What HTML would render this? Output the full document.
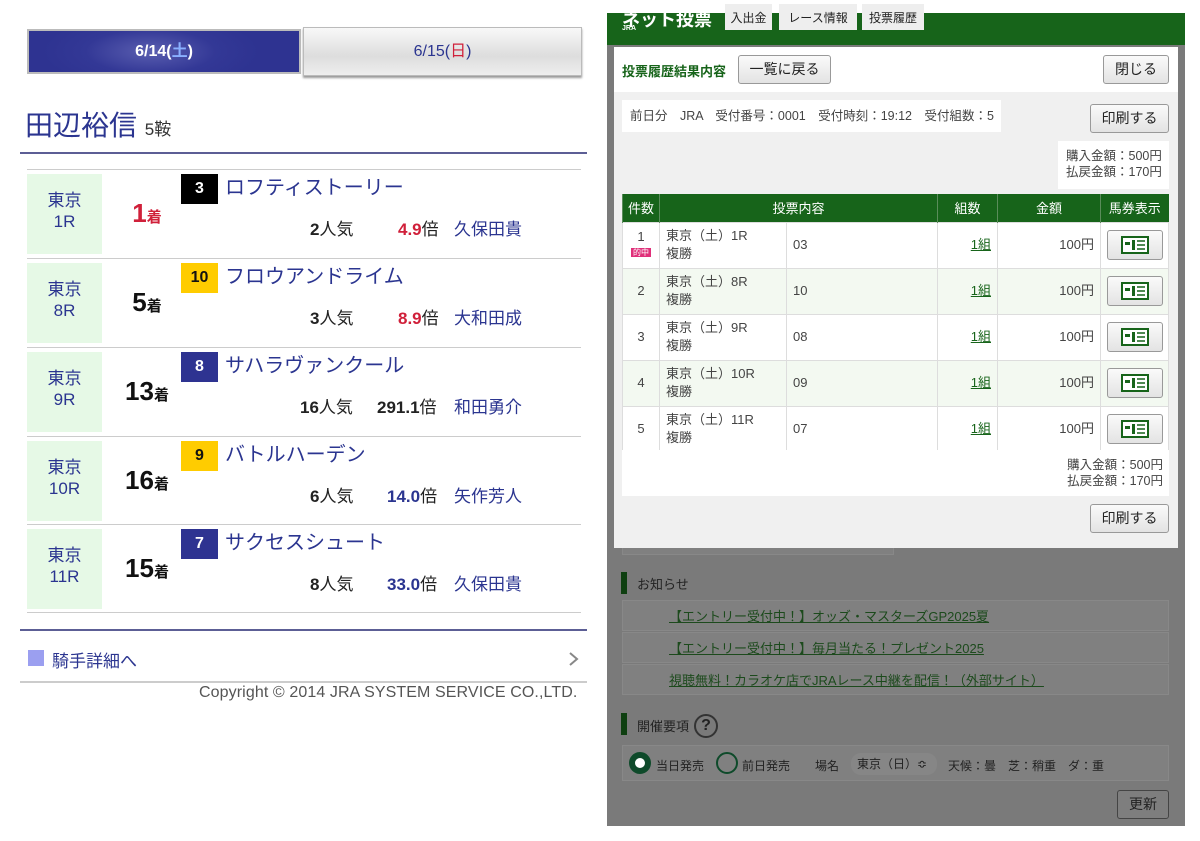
<!DOCTYPE html>
<html><head><meta charset="utf-8"><style>
*{margin:0;padding:0;box-sizing:border-box}
body{width:1200px;height:841px;background:#fff;position:relative;overflow:hidden;font-family:"Liberation Sans","Noto Sans CJK JP",sans-serif}
.a{position:absolute}
.tab1{left:27px;top:29px;width:274px;height:45px;background:radial-gradient(ellipse 40% 90% at 45% 50%,#5a5eb0 0%,#333896 60%,#2e3391 100%);border:2px solid #bbb;color:#fff;font-size:16px;text-align:center;line-height:41px;font-weight:bold}
.tab2{left:303px;top:27px;width:279px;height:49px;background:linear-gradient(#f8f8f8,#ddd 60%,#eee);border:1px solid #bbb;box-shadow:0 2px 2px #999;color:#2b3590;font-size:16px;text-align:center;line-height:47px}
.row{left:27px;width:554px;height:89px;border-top:1px solid #ccc}
.venue{left:0;top:4px;width:75px;height:80px;background:#e6f9e6;color:#2b3590;font-size:17px;text-align:center;padding-top:16px;line-height:21px}
.pos{left:85px;top:28px;width:70px;text-align:center;font-weight:bold;font-size:26px;color:#111}
.pos small{font-size:15px}
.badge{left:154px;top:4px;width:37px;height:30px;font-weight:bold;font-size:16px;text-align:center;line-height:30px}
.name{left:198px;top:4px;font-size:20px;color:#2b3590;line-height:28px}
.st{top:47px;font-size:17px;color:#222;line-height:26px}
.gbtn{background:linear-gradient(#fafafa,#e3e3e3);border:1px solid #999;border-radius:3px;font-size:14px;color:#222;text-align:center}
table{border-collapse:collapse;position:absolute;left:622px;top:194px;width:547px;font-size:13px;color:#444;background:#fff}
th{background:#17641a;color:#fff;font-weight:normal;height:28px;border-left:1px solid #5a8c5a}
td{border:1px solid #ddd;height:46px;vertical-align:middle;padding:0 6px;line-height:18px}
tr.e td{background:#f3f9f1}
.ic{display:inline-block;width:56px;height:30px;background:linear-gradient(#fafafa,#e3e3e3);border:1px solid #999;border-radius:3px;vertical-align:middle;padding-top:5px}
.nl{left:622px;width:547px;height:31px;background:#808080;border:1px solid #888;font-size:13px;color:#1c4a1c;padding-left:46px;line-height:31px;text-decoration:underline}
.ht{top:4px;height:26px;background:#eee;font-size:12px;text-align:center;line-height:28px;color:#222}
</style></head><body>
<div class="a tab1">6/14(<span style="color:#8ab0ff">土</span>)</div>
<div class="a tab2">6/15(<span style="color:#d0203a">日</span>)</div>
<div class="a" style="left:25px;top:104px;font-size:28px;color:#2b3590">田辺裕信 <span style="font-size:17px;color:#333">5鞍</span></div>
<div class="a" style="left:20px;top:152px;width:567px;height:2px;background:#5c5e95"></div>

<div class="a row" style="top:169px"><div class="a venue">東京<br>1R</div><div class="a pos" style="color:#d0203a">1<small>着</small></div><div class="a badge" style="background:#000;color:#fff">3</div><div class="a name">ロフティストーリー</div><div class="a st" style="left:283px"><b>2</b>人気</div><div class="a st" style="left:371px"><b style="color:#d0203a">4.9</b>倍</div><div class="a st" style="left:427px;color:#2b3590">久保田貴</div></div>
<div class="a row" style="top:258px"><div class="a venue">東京<br>8R</div><div class="a pos">5<small>着</small></div><div class="a badge" style="background:#ffcc00;color:#111">10</div><div class="a name">フロウアンドライム</div><div class="a st" style="left:283px"><b>3</b>人気</div><div class="a st" style="left:371px"><b style="color:#d0203a">8.9</b>倍</div><div class="a st" style="left:427px;color:#2b3590">大和田成</div></div>
<div class="a row" style="top:347px"><div class="a venue">東京<br>9R</div><div class="a pos">13<small>着</small></div><div class="a badge" style="background:#2e3391;color:#fff">8</div><div class="a name">サハラヴァンクール</div><div class="a st" style="left:273px"><b>16</b>人気</div><div class="a st" style="left:350px"><b>291.1</b>倍</div><div class="a st" style="left:427px;color:#2b3590">和田勇介</div></div>
<div class="a row" style="top:436px"><div class="a venue">東京<br>10R</div><div class="a pos">16<small>着</small></div><div class="a badge" style="background:#ffcc00;color:#111">9</div><div class="a name">バトルハーデン</div><div class="a st" style="left:283px"><b>6</b>人気</div><div class="a st" style="left:360px"><b style="color:#2b3590">14.0</b>倍</div><div class="a st" style="left:427px;color:#2b3590">矢作芳人</div></div>
<div class="a row" style="top:524px;border-bottom:1px solid #ccc"><div class="a venue">東京<br>11R</div><div class="a pos">15<small>着</small></div><div class="a badge" style="background:#2e3391;color:#fff">7</div><div class="a name">サクセスシュート</div><div class="a st" style="left:283px"><b>8</b>人気</div><div class="a st" style="left:360px"><b style="color:#2b3590">33.0</b>倍</div><div class="a st" style="left:427px;color:#2b3590">久保田貴</div></div>

<div class="a" style="left:20px;top:629px;width:567px;height:2px;background:#5c5e95"></div>
<div class="a" style="left:28px;top:650px;width:16px;height:16px;background:#9b9ff0"></div>
<div class="a" style="left:52px;top:647px;font-size:17px;color:#2b3590">騎手詳細へ</div>
<svg class="a" style="left:568px;top:651px" width="12" height="16"><path d="M2 2l7 6-7 6" fill="none" stroke="#888" stroke-width="2"/></svg>
<div class="a" style="left:20px;top:681px;width:567px;height:2px;background:#ccc"></div>
<div class="a" style="left:199px;top:684px;font-size:16px;color:#555;letter-spacing:0.1px">Copyright © 2014 JRA SYSTEM SERVICE CO.,LTD.</div>

<!-- right -->
<div class="a" style="left:607px;top:13px;width:578px;height:813px;background:#7a7a7a"></div>
<div class="a" style="left:607px;top:13px;width:578px;height:32px;background:#17641a"></div>
<div class="a" style="left:622px;top:6px;color:#fff;font-weight:bold;font-size:18px">ネット投票</div>
<div class="a" style="left:622px;top:25px;color:#fff;font-size:7px;font-weight:bold">JRA</div>
<div class="a ht" style="left:725px;width:47px">入出金</div>
<div class="a ht" style="left:779px;width:78px">レース情報</div>
<div class="a ht" style="left:862px;width:62px">投票履歴</div>
<div class="a" style="left:614px;top:47px;width:564px;height:501px;background:#f0f0f0"></div>
<div class="a" style="left:614px;top:47px;width:564px;height:45px;background:#fff"></div>
<div class="a" style="left:622px;top:61px;font-size:13px;font-weight:bold;color:#17641a">投票履歴結果内容</div>
<div class="a gbtn" style="left:738px;top:55px;width:93px;height:29px;line-height:27px">一覧に戻る</div>
<div class="a gbtn" style="left:1103px;top:55px;width:66px;height:29px;line-height:27px">閉じる</div>
<div class="a" style="left:622px;top:100px;width:379px;height:32px;background:#fff;font-size:12.5px;color:#444;line-height:32px;padding-left:8px;white-space:nowrap">前日分　JRA　受付番号：0001　受付時刻：19:12　受付組数：5</div>
<div class="a gbtn" style="left:1090px;top:104px;width:79px;height:29px;line-height:27px">印刷する</div>
<div class="a" style="left:1058px;top:141px;width:111px;height:48px;background:#fff;font-size:12.5px;color:#444;line-height:16px;padding:7px 0 0 8px">購入金額：500円<br>払戻金額：170円</div>
<table>
<tr><th style="width:37px">件数</th><th colspan="2">投票内容</th><th style="width:60px">組数</th><th style="width:103px">金額</th><th style="width:68px">馬券表示</th></tr>
<tr><td style="text-align:center;line-height:14px;padding:0">1<br><span style="background:#e0307a;color:#fff;font-size:8px;padding:0 2px">的中</span></td><td style="width:127px">東京（土）1R<br>複勝</td><td>03</td><td style="text-align:right;color:#17641a;text-decoration:underline">1組</td><td style="text-align:right">100円</td><td style="text-align:center;padding:0"><span class="ic"><svg width="28" height="18"><rect x="1" y="1" width="26" height="16" fill="#fff" stroke="#17641a" stroke-width="2"/><rect x="4" y="6" width="5" height="3" fill="#17641a"/><rect x="11" y="4" width="3" height="10" fill="#17641a"/><path d="M16 5h8M16 9h8M16 13h8" stroke="#17641a" stroke-width="1.5"/></svg></span></td></tr>
<tr class="e"><td style="text-align:center">2</td><td>東京（土）8R<br>複勝</td><td>10</td><td style="text-align:right;color:#17641a;text-decoration:underline">1組</td><td style="text-align:right">100円</td><td style="text-align:center;padding:0"><span class="ic"><svg width="28" height="18"><rect x="1" y="1" width="26" height="16" fill="#fff" stroke="#17641a" stroke-width="2"/><rect x="4" y="6" width="5" height="3" fill="#17641a"/><rect x="11" y="4" width="3" height="10" fill="#17641a"/><path d="M16 5h8M16 9h8M16 13h8" stroke="#17641a" stroke-width="1.5"/></svg></span></td></tr>
<tr><td style="text-align:center">3</td><td>東京（土）9R<br>複勝</td><td>08</td><td style="text-align:right;color:#17641a;text-decoration:underline">1組</td><td style="text-align:right">100円</td><td style="text-align:center;padding:0"><span class="ic"><svg width="28" height="18"><rect x="1" y="1" width="26" height="16" fill="#fff" stroke="#17641a" stroke-width="2"/><rect x="4" y="6" width="5" height="3" fill="#17641a"/><rect x="11" y="4" width="3" height="10" fill="#17641a"/><path d="M16 5h8M16 9h8M16 13h8" stroke="#17641a" stroke-width="1.5"/></svg></span></td></tr>
<tr class="e"><td style="text-align:center">4</td><td>東京（土）10R<br>複勝</td><td>09</td><td style="text-align:right;color:#17641a;text-decoration:underline">1組</td><td style="text-align:right">100円</td><td style="text-align:center;padding:0"><span class="ic"><svg width="28" height="18"><rect x="1" y="1" width="26" height="16" fill="#fff" stroke="#17641a" stroke-width="2"/><rect x="4" y="6" width="5" height="3" fill="#17641a"/><rect x="11" y="4" width="3" height="10" fill="#17641a"/><path d="M16 5h8M16 9h8M16 13h8" stroke="#17641a" stroke-width="1.5"/></svg></span></td></tr>
<tr><td style="text-align:center">5</td><td>東京（土）11R<br>複勝</td><td>07</td><td style="text-align:right;color:#17641a;text-decoration:underline">1組</td><td style="text-align:right">100円</td><td style="text-align:center;padding:0"><span class="ic"><svg width="28" height="18"><rect x="1" y="1" width="26" height="16" fill="#fff" stroke="#17641a" stroke-width="2"/><rect x="4" y="6" width="5" height="3" fill="#17641a"/><rect x="11" y="4" width="3" height="10" fill="#17641a"/><path d="M16 5h8M16 9h8M16 13h8" stroke="#17641a" stroke-width="1.5"/></svg></span></td></tr>
</table>
<div class="a" style="left:622px;top:450px;width:547px;height:46px;background:#fff;font-size:12.5px;color:#444;line-height:16px;text-align:right;padding:7px 6px 0 0">購入金額：500円<br>払戻金額：170円</div>
<div class="a gbtn" style="left:1090px;top:504px;width:79px;height:29px;line-height:27px">印刷する</div>
<div class="a" style="left:622px;top:548px;width:272px;height:7px;background:#808080;border:1px solid #888;border-top:0"></div>

<div class="a" style="left:621px;top:572px;width:6px;height:22px;background:#0e3f10"></div>
<div class="a" style="left:637px;top:574px;font-size:13px;color:#222">お知らせ</div>
<div class="a nl" style="top:600px">【エントリー受付中！】オッズ・マスターズGP2025夏</div>
<div class="a nl" style="top:632px">【エントリー受付中！】毎月当たる！プレゼント2025</div>
<div class="a nl" style="top:664px">視聴無料！カラオケ店でJRAレース中継を配信！（外部サイト）</div>
<div class="a" style="left:621px;top:713px;width:6px;height:22px;background:#0e3f10"></div>
<div class="a" style="left:637px;top:716px;font-size:13px;color:#222">開催要項</div>
<div class="a" style="left:694px;top:714px;width:24px;height:24px;border:2px solid #333;border-radius:50%;text-align:center;font-weight:bold;font-size:16px;line-height:20px;color:#222">?</div>
<div class="a" style="left:622px;top:745px;width:547px;height:36px;background:#808080;border:1px solid #888"></div>
<div class="a" style="left:629px;top:752px;width:22px;height:22px;border:6px solid #0e4a2a;border-radius:50%;background:#fff"></div>
<div class="a" style="left:656px;top:757px;font-size:12px;color:#222">当日発売</div>
<div class="a" style="left:716px;top:752px;width:22px;height:22px;border:2px solid #0e4a2a;border-radius:50%"></div>
<div class="a" style="left:742px;top:757px;font-size:12px;color:#222">前日発売</div>
<div class="a" style="left:815px;top:757px;font-size:12px;color:#222">場名</div>
<div class="a" style="left:851px;top:753px;width:86px;height:22px;background:#868686;border-radius:10px;font-size:12px;color:#222;line-height:22px;padding-left:6px">東京（日）≎</div>
<div class="a" style="left:948px;top:757px;font-size:12px;color:#222">天候：曇　芝：稍重　ダ：重</div>
<div class="a" style="left:1117px;top:790px;width:52px;height:29px;border:1px solid #444;border-radius:3px;background:#7e7e7e;font-size:14px;text-align:center;line-height:27px;color:#222">更新</div>
</body></html>
